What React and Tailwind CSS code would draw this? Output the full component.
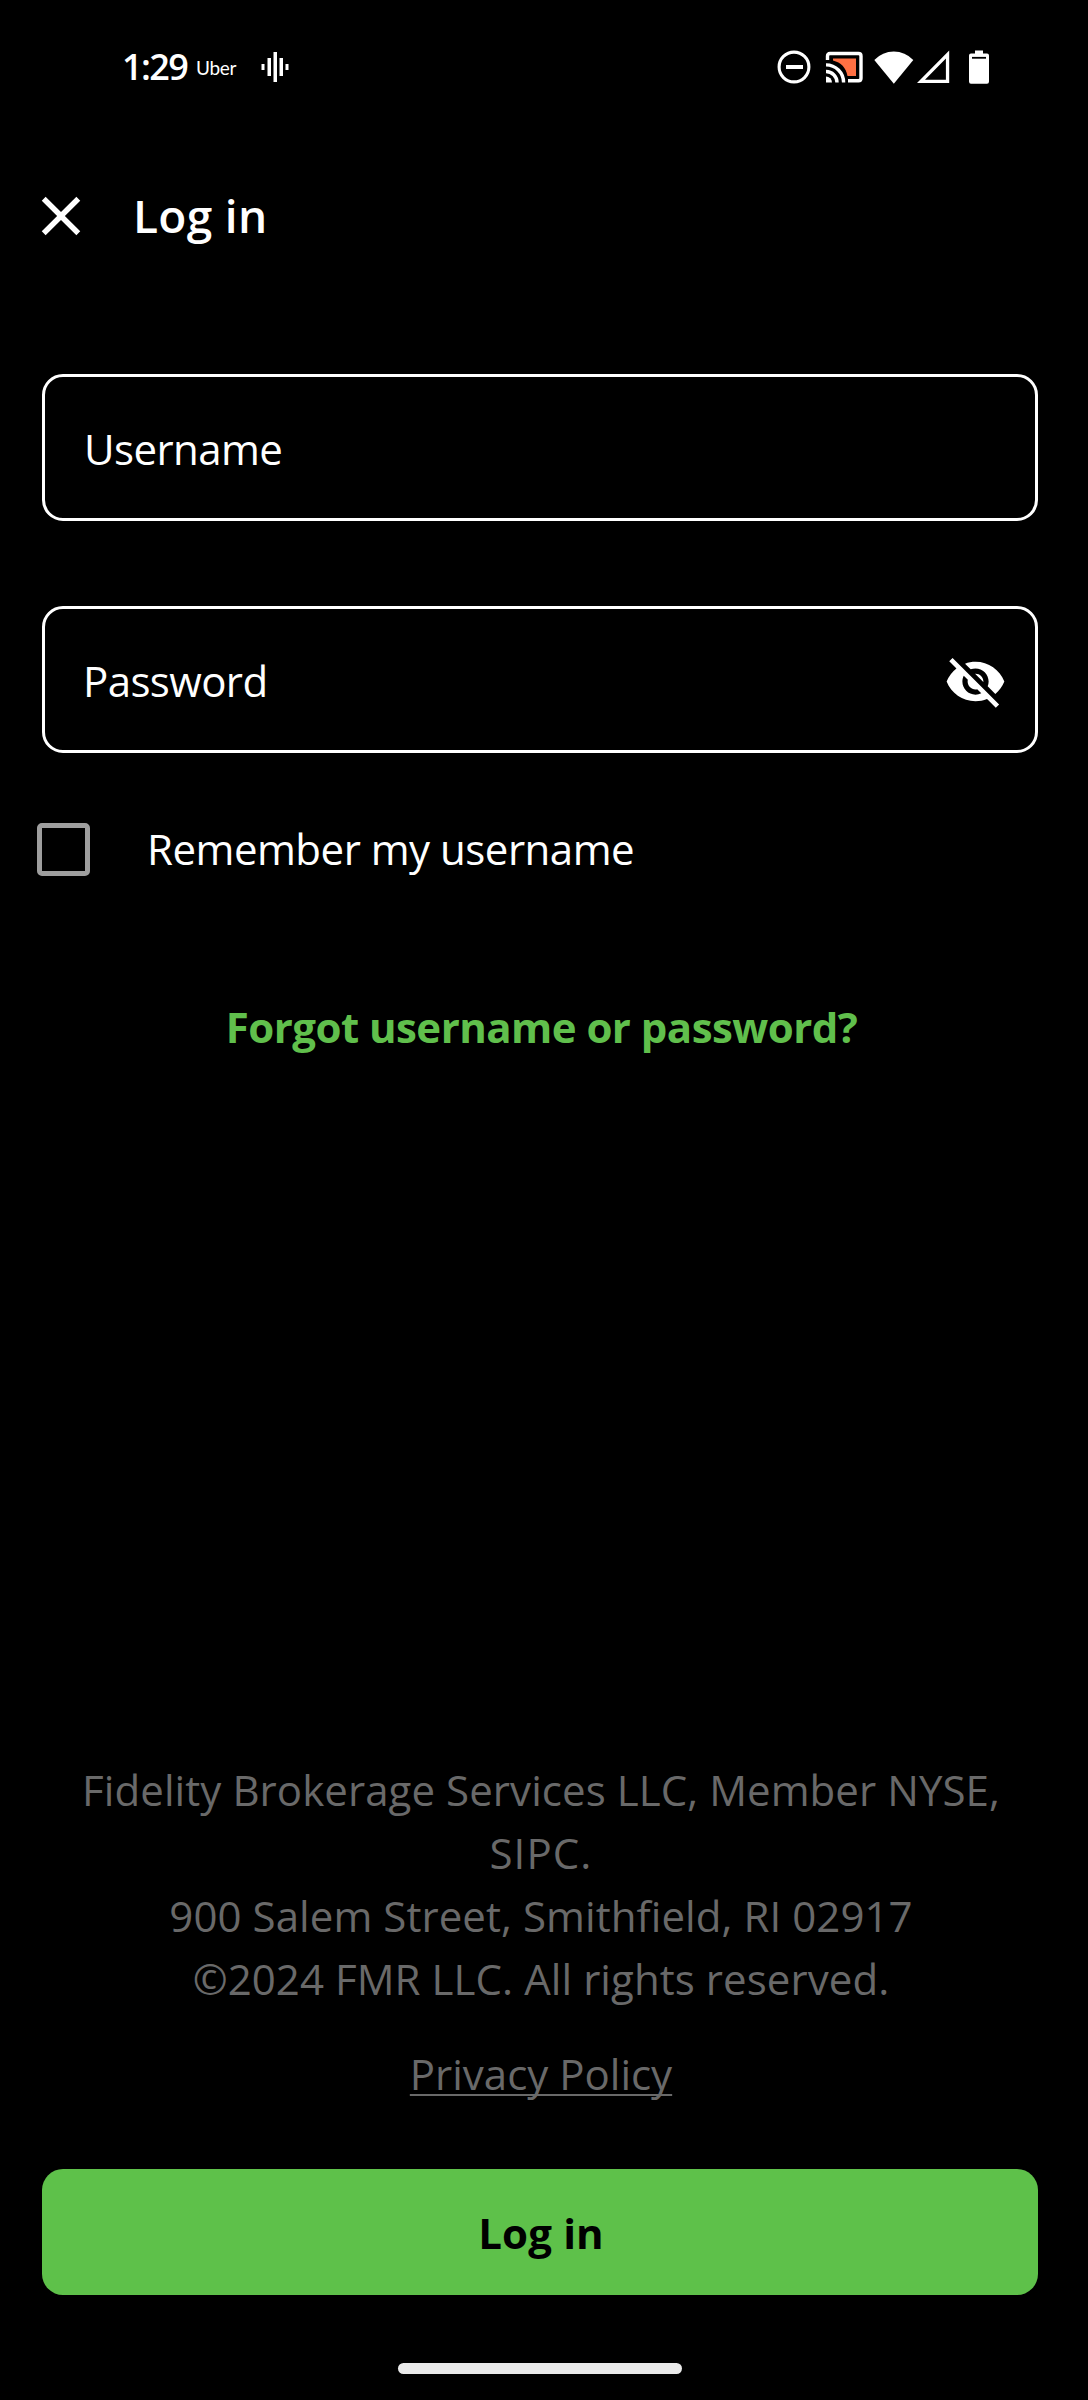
import React from "react";
import { MdClose, MdVisibilityOff } from "react-icons/md";

function WaveIcon() {
  return (
    <svg className="ml-[24px] h-[32px] w-[28px]" viewBox="0 0 28 32" fill="#fff">
      <rect x="0.5" y="13" width="3" height="6" />
      <rect x="6.5" y="7" width="3.5" height="18" />
      <rect x="12.5" y="1" width="3.5" height="30" />
      <rect x="18.5" y="7" width="3.5" height="18" />
      <rect x="24.5" y="13" width="3" height="6" />
    </svg>
  );
}

function DndIcon() {
  return (
    <svg className="h-[36px] w-[36px]" viewBox="0 0 36 36" fill="none" stroke="#fff">
      <circle cx="18" cy="18" r="14.9" strokeWidth="3.1" />
      <path d="M10 18h17" strokeWidth="4" />
    </svg>
  );
}

function CastIcon() {
  return (
    <svg className="ml-[13px] h-[32px] w-[40px]" viewBox="0 0 40 32">
      <path
        d="M2 9.5V5.5Q2 3 4.5 3H33Q35.5 3 35.5 5.5V27.8Q35.5 30.3 33 30.3H22.5"
        transform="translate(.5 -.5)"
        fill="none"
        stroke="#fff"
        strokeWidth="3.4"
      />
      <path d="M8 7.5H31V25H22.5C21 16.5 16 11.5 8 9.5Z" fill="#ff7043" />
      <path d="M1 25.5A6 6 0 0 1 7 31.5H1Z" fill="#fff" />
      <path d="M1 20.5A11 11 0 0 1 12 31.5M1 13.9A17.6 17.6 0 0 1 18.6 31.5" fill="none" stroke="#fff" strokeWidth="3.4" />
    </svg>
  );
}

function WifiIcon() {
  return (
    <svg className="ml-[9px] h-[33px] w-[40px]" viewBox="0 0 40 33" fill="#fff">
      <path d="M0.3 9Q8.5 0.5 19.8 0.5T39.3 9L19.8 32.8Z" />
    </svg>
  );
}

function SignalIcon() {
  return (
    <svg className="ml-[3px] h-[34px] w-[33px]" viewBox="0 0 33 34">
      <path d="M32.2 0.5V33H0Z M28.9 8.6L8 29.7H28.9Z" fill="#fff" fillRule="evenodd" />
    </svg>
  );
}

function BatteryIcon() {
  return (
    <svg className="ml-[19px] h-[34px] w-[20px]" viewBox="0 0 20 34">
      <path
        d="M6 0.5H14V3.5H18Q20 3.5 20 5.5V31.5Q20 33.7 18 33.7H2Q0 33.7 0 31.5V5.5Q0 3.5 2 3.5H6Z"
        fill="#fff"
      />
      <path d="M3 7.8H17" stroke="#000" strokeWidth="1.8" />
    </svg>
  );
}

function StatusBar() {
  return (
    <div className="flex h-[134px] items-center justify-between pr-[99px] pl-[122px]">
      <div className="flex items-center">
        <span className="w-[74px] text-[36px] leading-[40px] font-semibold tracking-[-1.6px]">1:29</span>
        <span className="mt-px w-[41px] font-['Lato',sans-serif] text-[19px] leading-[24px] tracking-[-0.3px]">Uber</span>
        <WaveIcon />
      </div>
      <div className="flex items-center">
        <DndIcon />
        <CastIcon />
        <WifiIcon />
        <SignalIcon />
        <BatteryIcon />
      </div>
    </div>
  );
}

function Header() {
  return (
    <header className="flex h-[164px] items-center pl-[28px]">
      <MdClose className="h-[66px] w-[66px]" />
      <h1 className="-mt-[2px] ml-[39px] text-[46px] leading-[60px] font-semibold tracking-[0.33px]">Log in</h1>
    </header>
  );
}

export default function App() {
  return (
    <div className="flex h-[2400px] w-[1088px] flex-col bg-black font-['Open_Sans',sans-serif] text-[42px] leading-[63px] text-white">
      <StatusBar />
      <Header />
      <main className="mt-[76px] flex flex-1 flex-col">
        <div className="mx-[42px] flex h-[147px] w-[996px] items-center rounded-[21px] border-[3px] border-white pl-[39px]">
          <span className="mt-px tracking-[-0.6px]">Username</span>
        </div>
        <div className="mx-[42px] mt-[85px] flex h-[147px] w-[996px] items-center justify-between rounded-[21px] border-[3px] border-white pr-[28px] pl-[38px]">
          <span className="mt-px tracking-[-0.6px]">Password</span>
          <MdVisibilityOff className="mt-[3px] h-[63px] w-[63px]" />
        </div>
        <label className="mt-[63px] flex items-center pl-[37px]">
          <span className="mt-[2px] h-[53px] w-[53px] rounded-[5px] border-[5px] border-[#9e9e9e]" />
          <span className="mt-px ml-[57px] tracking-[-0.5px]">Remember my username</span>
        </label>
        <a className="mt-[115px] self-center pr-[5px] font-bold tracking-[-0.54px] text-[#60bf4c]">
          Forgot username or password?
        </a>
        <footer className="mt-auto flex w-[1082px] flex-col items-center text-center text-[#696969]">
          <p className="tracking-[0.07px]">
            Fidelity Brokerage Services LLC, Member NYSE,
            <br />
            <span className="tracking-[1.1px]">SIPC.</span>
            <br />
            900 Salem Street, Smithfield, RI 02917
            <br />
            ©2024 FMR LLC. All rights reserved.
          </p>
          <a className="mt-[32px] underline decoration-[2px] underline-offset-[4px] [text-decoration-skip-ink:none]">
            Privacy Policy
          </a>
        </footer>
        <button className="mx-[42px] mt-[64px] h-[126px] w-[996px] shrink-0 rounded-[21px] bg-[#5ec14a] pl-[2px] font-bold tracking-[0.16px] text-black">
          Log in
        </button>
        <div className="mt-[68px] mb-[26px] ml-[398px] h-[11px] w-[284px] shrink-0 rounded-full bg-[#eaeaea]" />
      </main>
    </div>
  );
}
